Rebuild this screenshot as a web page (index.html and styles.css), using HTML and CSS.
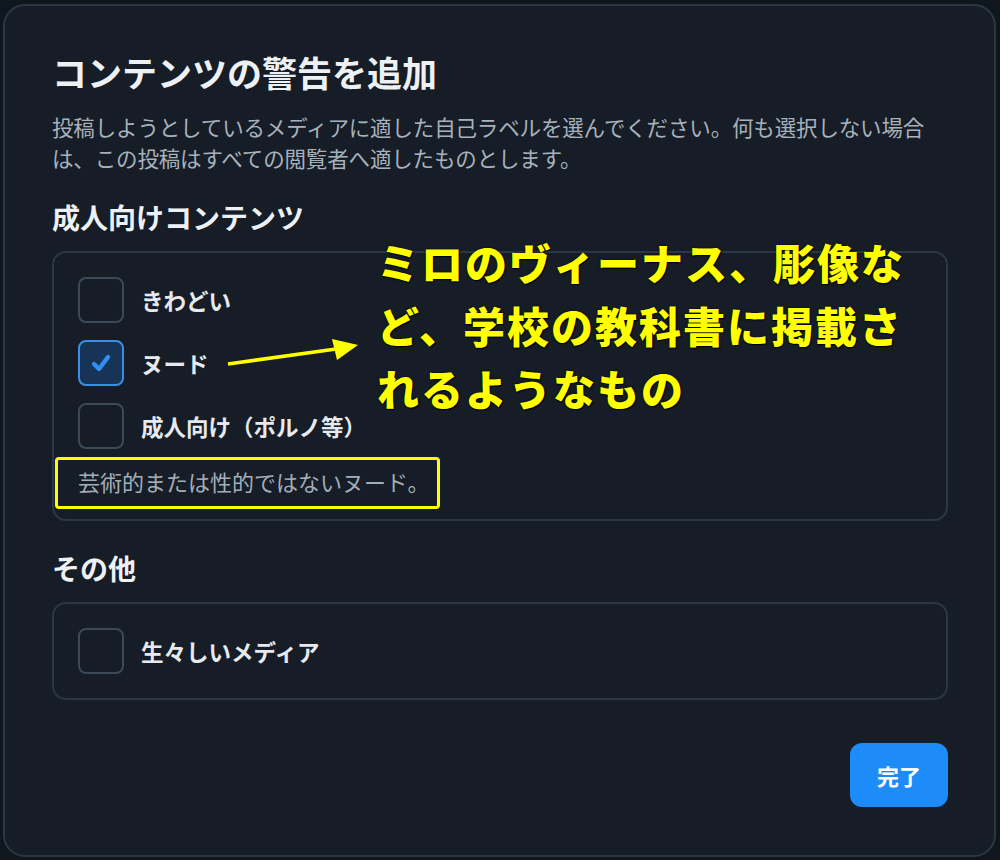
FILE: index.html
```html
<!DOCTYPE html>
<html lang="ja">
<head>
    <meta charset="UTF-8">
    <meta name="viewport" content="width=device-width, initial-scale=1.0">
    <title>コンテンツの警告を追加</title>
    <link rel="stylesheet" href="styles.css">
</head>
<body>

<div class="dialog">
    <h1 class="title">コンテンツの警告を追加</h1>
    <p class="lead">投稿しようとしているメディアに適した自己ラベルを選んでください。何も選択しない場合は、この投稿はすべての閲覧者へ適したものとします。</p>

    <h2 class="section-title">成人向けコンテンツ</h2>
    <div class="group">
        <label class="option">
            <span class="box"></span>
            <span class="option-label">きわどい</span>
        </label>
        <label class="option">
            <span class="box checked">
                <svg width="22" height="22" viewBox="0 0 22 22"><path d="M4 12 L9 17 L18 5" fill="none" stroke="#2f8ff5" stroke-width="4.4" stroke-linecap="round" stroke-linejoin="round"/></svg>
            </span>
            <span class="option-label">ヌード</span>
        </label>
        <label class="option">
            <span class="box"></span>
            <span class="option-label">成人向け（ポルノ等）</span>
        </label>
        <p class="hint"><span class="hint-text">芸術的または性的ではないヌード。</span></p>
    </div>

    <h2 class="section-title other">その他</h2>
    <div class="group single">
        <label class="option">
            <span class="box"></span>
            <span class="option-label">生々しいメディア</span>
        </label>
    </div>

    <div class="actions">
        <button class="done">完了</button>
    </div>

    <!-- annotation overlay -->
    <svg class="arrow" width="140" height="30" viewBox="0 0 140 30">
        <line x1="2" y1="26" x2="110" y2="11" stroke="#ffff00" stroke-width="3.5"/>
        <polygon points="106,1 132,7 111,22" fill="#ffff00"/>
    </svg>
    <div class="note">ミロのヴィーナス、彫像な<br>ど、学校の教科書に掲載さ<br>れるようなもの</div>
</div>

</body>
</html>
```

FILE: styles.css
```css
body {
    margin: 0;
    background-color: #10161e;
    font-family: "Noto Sans CJK JP", "Noto Sans", sans-serif;
}

.dialog {
    position: relative;
    box-sizing: border-box;
    width: 993px;
    height: 853px;
    margin: 4px 0 0 3px;
    padding: 44px 46px 0 47px;
    background-color: #161d26;
    border: 2px solid #2b3744;
    border-radius: 22px;
}

.title {
    margin: 0;
    font-size: 35px;
    line-height: 44px;
    font-weight: 700;
    color: #eef1f4;
}

.lead {
    margin: 17px 0 0;
    font-size: 21.5px;
    line-height: 31px;
    color: #a7b1bc;
    letter-spacing: -0.15px;
}

.section-title {
    margin: 26px 0 0;
    font-size: 28px;
    line-height: 36px;
    font-weight: 700;
    color: #eef1f4;
}

.section-title.other {
    margin-top: 29px;
}

.group {
    margin-top: 16px;
    padding: 24px 24px 23px;
    border: 2px solid #2b3744;
    border-radius: 14px;
    display: flex;
    flex-direction: column;
    gap: 17px;
}

.group.single {
    padding-bottom: 24px;
}

.option {
    display: flex;
    align-items: center;
    gap: 17px;
}

.box {
    box-sizing: border-box;
    width: 46px;
    height: 46px;
    border: 2px solid #3b4958;
    border-radius: 8px;
    display: flex;
    align-items: center;
    justify-content: center;
}

.box.checked {
    background-color: #173456;
    border-color: #3a8ee6;
}

.option-label {
    font-size: 22.5px;
    font-weight: 700;
    color: #e6eaee;
}

.hint {
    margin: 0;
    font-size: 22px;
    line-height: 30px;
    color: #a3adb8;
}

.hint-text {
    position: relative;
    display: inline-block;
}

.hint-text::before {
    content: "";
    position: absolute;
    top: -9px;
    bottom: -13px;
    left: -23px;
    right: -10px;
    border: 3px solid #ffff00;
    border-radius: 4px;
}

.actions {
    display: flex;
    justify-content: flex-end;
    margin-top: 43px;
}

.done {
    width: 98px;
    height: 64px;
    border: none;
    border-radius: 12px;
    background-color: #1d8cf8;
    color: #ffffff;
    font-family: inherit;
    font-size: 22px;
    font-weight: 700;
    cursor: pointer;
}

.arrow {
    position: absolute;
    left: 221px;
    top: 332px;
}

.note {
    position: absolute;
    left: 372px;
    top: 224px;
    font-size: 42px;
    line-height: 63px;
    font-weight: 900;
    color: #ffff00;
    letter-spacing: 2px;
    text-shadow: 0 0 2px #000, 1px 1px 1px #000;
}
```
